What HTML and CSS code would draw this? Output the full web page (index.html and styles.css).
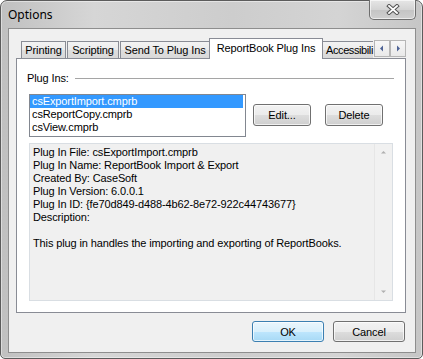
FILE: index.html
```html
<!DOCTYPE html>
<html>
<head>
<meta charset="utf-8">
<title>Options</title>
<link rel="stylesheet" href="styles.css">
</head>
<body>
<div class="window">
  <div class="titlebar">
    <span class="title">Options</span>
    <div class="close">
      <svg width="14" height="11" viewBox="0 0 14 11">
        <path d="M3 2 L11 9 M11 2 L3 9" stroke="#555" stroke-width="3.8" stroke-linecap="square" fill="none"/>
        <path d="M3 2 L11 9 M11 2 L3 9" stroke="#fff" stroke-width="1.8" stroke-linecap="square" fill="none"/>
      </svg>
    </div>
  </div>
  <div class="client">
    <div class="tabs">
      <div class="tabrow">
        <div class="tab t1">Printing</div>
        <div class="tab t2">Scripting</div>
        <div class="tab t3">Send To Plug Ins</div>
        <div class="tab sel">ReportBook Plug Ins</div>
        <div class="tab t5">Accessibili</div>
      </div>
      <div class="scroller">
        <div class="sbtn"><svg width="14" height="15" viewBox="0 0 14 15"><path d="M8 4.5 L5 7.5 L8 10.5 Z" fill="#4e6396"/></svg></div>
        <div class="sbtn"><svg width="14" height="15" viewBox="0 0 14 15"><path d="M6 4.5 L9 7.5 L6 10.5 Z" fill="#4e6396"/></svg></div>
      </div>
    </div>
    <div class="panel">
      <div class="group"><span class="glabel">Plug Ins:</span><div class="rule"></div></div>
      <div class="row">
        <div class="list">
          <div class="item selected">csExportImport.cmprb</div>
          <div class="item">csReportCopy.cmprb</div>
          <div class="item">csView.cmprb</div>
        </div>
        <div class="btn edit">Edit...</div>
        <div class="btn delete">Delete</div>
      </div>
      <div class="info">
        <div class="infotext">
          <div>Plug In File: csExportImport.cmprb</div>
          <div>Plug In Name: ReportBook Import &amp; Export</div>
          <div>Created By: CaseSoft</div>
          <div>Plug In Version: 6.0.0.1</div>
          <div>Plug In ID: {fe70d849-d488-4b62-8e72-922c44743677}</div>
          <div>Description:</div>
          <div>&nbsp;</div>
          <div>This plug in handles the importing and exporting of ReportBooks.</div>
        </div>
        <div class="vscroll">
          <svg width="17" height="17" viewBox="0 0 17 17"><path d="M6 9.5 L8.5 7 L11 9.5 Z" fill="#b0b0b0"/></svg>
          <svg width="17" height="17" viewBox="0 0 17 17"><path d="M6 7.5 L8.5 10 L11 7.5 Z" fill="#b0b0b0"/></svg>
        </div>
      </div>
    </div>
    <div class="footer">
      <div class="btn dbtn ok">OK</div>
      <div class="btn dbtn">Cancel</div>
    </div>
  </div>
</div>
</body>
</html>
```

FILE: styles.css
```css
html, body {
  margin: 0;
  padding: 0;
  background: #ffffff;
}

body {
  font-family: "Liberation Sans", Arial, sans-serif;
  font-size: 11px;
  letter-spacing: -0.12px;
  color: #000;
}

.window {
  width: 423px;
  height: 359px;
  box-sizing: border-box;
  border: 1px solid #5c5c5c;
  border-radius: 7px 7px 5px 5px;
  background: linear-gradient(90deg, #c0c0c0 0%, #d6d6d6 22%, #cdcdcd 55%, #d4d4d4 80%, #c6c6c6 100%);
  box-shadow: inset 0 0 0 1px rgba(255, 255, 255, 0.45);
  display: flex;
  flex-direction: column;
}

.titlebar {
  height: 27px;
  flex: none;
  display: flex;
  align-items: flex-start;
}

.title {
  font-family: "Noto Sans", "Open Sans", sans-serif;
  font-size: 12px;
  letter-spacing: 0;
  line-height: 16px;
  padding: 6px 0 0 7px;
  color: #000;
}

.close {
  margin: -1px 6px 0 auto;
  width: 47px;
  height: 20px;
  box-sizing: border-box;
  border: 1px solid #6e6e6e;
  border-top: none;
  border-radius: 0 0 5px 5px;
  background: linear-gradient(#e6e6e6, #d4d4d4 50%, #c4c4c4 51%, #cfcfcf);
  box-shadow: inset 0 0 0 1px rgba(255, 255, 255, 0.6);
  display: flex;
  align-items: center;
  justify-content: center;
}

.client {
  margin: 0 6px 0 7px;
  height: 325px;
  flex: none;
  box-sizing: border-box;
  border: 1px solid #8e8e8e;
  background: #f0f0f0;
  display: flex;
  flex-direction: column;
}

.tabs {
  margin: 9px 0 0 7px;
  width: 390px;
  height: 21px;
  display: flex;
  position: relative;
  z-index: 1;
}

.tabrow {
  flex: 1;
  min-width: 0;
  overflow: hidden;
  display: flex;
  align-items: flex-start;
  padding-left: 5px;
  height: 21px;
}

.tab {
  flex: none;
  box-sizing: border-box;
  height: 17px;
  margin-top: 3px;
  margin-right: 1px;
  border: 1px solid #898c95;
  border-bottom: none;
  background: linear-gradient(#f3f3f3, #ebebeb 50%, #dedede 51%, #d9d9d9);
  line-height: 16px;
  text-align: center;
  white-space: nowrap;
}

.t1 { width: 45px; }
.t2 { width: 52px; }
.t3 { width: 90px; margin-right: 0; }

.tab.sel {
  width: 114px;
  height: 21px;
  margin-top: 0;
  margin-left: -1px;
  margin-right: 0;
  background: #ffffff;
  line-height: 19px;
  position: relative;
  z-index: 2;
}

.t5 {
  width: 51px;
  margin-left: -1px;
  margin-right: 0;
  text-align: left;
  padding-left: 3px;
  letter-spacing: -0.4px;
  border-right: none;
}

.scroller {
  flex: none;
  display: flex;
  margin-top: 2px;
  height: 17px;
}

.sbtn {
  width: 16px;
  height: 17px;
  box-sizing: border-box;
  border: 1px solid #b6b6b6;
  background: linear-gradient(#f7f7f7, #e9e9e9);
  display: flex;
  align-items: center;
  justify-content: center;
}

.panel {
  margin: -1px 0 0 7px;
  width: 390px;
  height: 255px;
  box-sizing: border-box;
  border: 1px solid #898c95;
  background: #ffffff;
  padding: 13px 11px 0 12px;
}

.group {
  display: flex;
  align-items: center;
  height: 13px;
  margin-left: -2px;
  line-height: 13px;
}

.rule {
  flex: 1;
  margin-left: 6px;
  border-top: 1px solid #a5a5a5;
}

.row {
  display: flex;
  align-items: flex-start;
  margin-top: 9px;
}

.list {
  width: 217px;
  height: 43px;
  box-sizing: border-box;
  border: 1px solid #828790;
  background: #ffffff;
  padding: 0 2px 0 0;
}

.item {
  height: 13px;
  line-height: 13px;
  padding-left: 2px;
  white-space: nowrap;
}

.item.selected {
  background: #3399ff;
  color: #ffffff;
}

.btn {
  box-sizing: border-box;
  border: 1px solid #707070;
  border-radius: 3px;
  background: linear-gradient(#f2f2f2, #ebebeb 50%, #dddddd 51%, #cfcfcf);
  box-shadow: inset 0 0 0 1px rgba(255, 255, 255, 0.7);
  display: flex;
  align-items: center;
  justify-content: center;
}

.edit, .delete {
  width: 58px;
  height: 22px;
  margin-top: 10px;
}

.edit { margin-left: 7px; }
.delete { margin-left: 14px; }

.info {
  margin-top: 6px;
  width: 364px;
  height: 158px;
  box-sizing: border-box;
  border: 1px solid #d9dee3;
  background: #f0f0f0;
  display: flex;
}

.infotext {
  flex: 1;
  padding: 2px 0 0 3px;
  line-height: 13px;
  white-space: nowrap;
}

.vscroll {
  width: 17px;
  flex: none;
  border-left: 1px solid #e6e6e6;
  background: #f1f1f1;
  display: flex;
  flex-direction: column;
  justify-content: space-between;
}

.footer {
  display: flex;
  justify-content: flex-end;
  gap: 9px;
  margin-top: 8px;
  padding-right: 10px;
}

.dbtn {
  width: 72px;
  height: 21px;
}

.ok {
  border-color: #3c7fb1;
  background: linear-gradient(#eaf6fd, #d9f0fc 50%, #bee6fd 51%, #a7d9f5);
}
```
